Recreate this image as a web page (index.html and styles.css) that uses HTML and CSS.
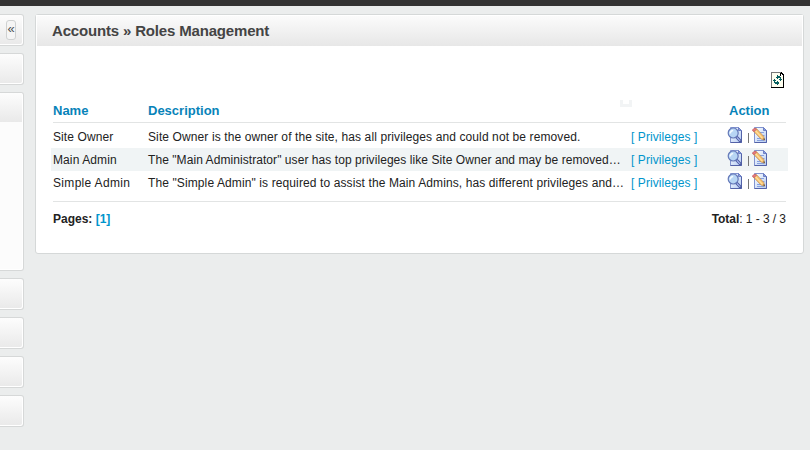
FILE: index.html
```html
<!DOCTYPE html>
<html lang="en">
<head>
<meta charset="utf-8">
<title>Roles Management</title>
<link rel="stylesheet" href="styles.css">
</head>
<body>
<svg class="defs" width="0" height="0">
  <defs>
    <linearGradient id="paper" x1="0" y1="0" x2="1" y2="1"><stop offset="0" stop-color="#fff"/><stop offset="1" stop-color="#b4ccf4"/></linearGradient>
    <symbol id="view" viewBox="0 0 16 16">
      <path d="M3.5.5h8l3 3v12h-11z" fill="url(#paper)" stroke="#8294d0"/>
      <path d="M14.5 3.5v12h-11" fill="none" stroke="#5362a8"/>
      <path d="M11.5.5v3h3z" fill="#8ba0e0" stroke="#6d7fc4"/>
      <path d="M9.8 10.3l3.5 3.7" stroke="#4d5ba0" stroke-width="3" stroke-linecap="round"/>
      <path d="M9.8 10.3l3.3 3.5" stroke="#a9b9f0" stroke-width="1.2"/>
      <circle cx="6.2" cy="6" r="5" fill="#b7d5f4" stroke="#6478b8" stroke-width="1.2"/>
      <path d="M3.2 6.5a3 3 0 0 1 3-3" fill="none" stroke="#f2faff" stroke-width="1.6"/>
    </symbol>
    <symbol id="edit" viewBox="0 0 16 16">
      <path d="M2.5.5h9l3 3v12h-12z" fill="url(#paper)" stroke="#8294d0"/>
      <path d="M14.5 3.5v12h-12" fill="none" stroke="#5362a8"/>
      <path d="M11.5.5v3h3z" fill="#8ba0e0" stroke="#6d7fc4"/>
      <path d="M8 5.5h4M9.5 8.5h3M5 11.5h4M5 13.5h7" stroke="#86a0df"/>
      <path d="M.8 3.6l3.4-2.4 7.6 8.3.9 3.8-3.7-1.3z" fill="#f6bf6c" stroke="#b98550" stroke-width=".6"/>
      <path d="M3 3.2l7.3 8" stroke="#ffe2a2" stroke-width="1.2"/>
      <path d="M.3 2.9L2.9 1l1.5 1.5L1.9 4.7z" fill="#ec7b7b" stroke="#b85661" stroke-width=".7"/>
      <path d="M11 12l1.8 1.3-.5-2z" fill="#333"/>
    </symbol>
  </defs>
</svg>
<div class="topbar"></div>
<div class="layout">
  <aside class="side">
    <div class="box"><span class="collapse">«</span></div>
    <div class="box"></div>
    <div class="box open"><div class="cap"></div></div>
    <div class="box"></div>
    <div class="box"></div>
    <div class="box"></div>
    <div class="box"></div>
  </aside>
  <main class="panel">
    <h1><span>Accounts » Roles Management</span></h1>
    <div class="content">
      <div class="tools">
        <svg class="refresh" width="13" height="16" viewBox="0 0 13 16" shape-rendering="crispEdges">
          <path d="M0 0h10l3 3v13H0z" fill="#000"/>
          <path d="M0 0h10v1H1v14H0z" fill="#777"/>
          <path d="M1 1h8v3h3v11H1z" fill="#fffff0"/>
          <path d="M10 2h1v1h1v1h-2z" fill="#fff"/>
          <path d="M6 3h1v1h2v1h1v2h1v1h-1v1H9V8H8V7h1V6H7v1H6V6H5V5h1zM3 7h1v1h1v1H4v1h2V9h1v1h1v2H7v1H6v-1H4v-1H3V9H2V8h1z" fill="#075f60"/>
        </svg>
      </div>
      <div class="row head"><span>Name</span><span>Description</span><span></span><span class="act">Action</span><i class="notch"></i></div>
      <div class="row"><span class="name">Site Owner</span><span class="desc d1">Site Owner is the owner of the site, has all privileges and could not be removed.</span><a>[ Privileges ]</a><span class="icons"><svg><use href="#view"/></svg><b></b><svg><use href="#edit"/></svg></span></div>
      <div class="row alt"><span class="name">Main Admin</span><span class="desc d2">The "Main Administrator" user has top privileges like Site Owner and may be removed…</span><a>[ Privileges ]</a><span class="icons"><svg><use href="#view"/></svg><b></b><svg><use href="#edit"/></svg></span></div>
      <div class="row"><span class="name n3">Simple Admin</span><span class="desc d3">The "Simple Admin" is required to assist the Main Admins, has different privileges and…</span><a>[ Privileges ]</a><span class="icons"><svg><use href="#view"/></svg><b></b><svg><use href="#edit"/></svg></span></div>
      <div class="foot"><span class="pages"><strong>Pages: <a>[1]</a></strong></span><span class="total"><strong>Total</strong>: 1 - 3 / 3</span></div>
    </div>
  </main>
</div>
</body>
</html>
```
FILE: styles.css
```css
* { box-sizing: border-box; }
body { margin: 0; height: 450px; overflow: hidden; background: #ebeded; color: #222; font: 12px/23px "Liberation Sans", Arial, sans-serif; }
.defs { position: absolute; }
.topbar { height: 6px; background: #333; }
.layout { display: flex; gap: 11px; padding-top: 8px; align-items: flex-start; }
.side { width: 24px; display: flex; flex-direction: column; gap: 7px; }
.box { height: 32px; border: 1px solid #d6d8d8; border-left: 0; border-radius: 0 3px 3px 0; background: linear-gradient(#fdfdfd, #e9e9e9); box-shadow: inset -1px -1px #fff; }
.box.open { height: 179px; background: #fcfcfc; }
.cap { height: 29px; margin-right: 1px; background: linear-gradient(#fdfdfd, #e9e9e9); }
.collapse { display: block; width: 10px; height: 20px; margin: 5px 0 0 6px; border: 1px solid #cfd1d1; border-radius: 3px; background: #f5f5f5; color: #4a5056; font-size: 13px; line-height: 16px; text-align: center; }
.panel { width: 769px; height: 240px; border: 1px solid #d5d8d8; border-radius: 3px; background: #fff; }
h1 { height: 31px; margin: 0; padding-left: 15px; border: 1px solid #fff; border-bottom: 0; background: linear-gradient(#fbfbfb, #e7e7e7); color: #444; font-size: 15px; line-height: 30px; }
h1 span { letter-spacing: -.17px; }
.content { padding: 0 15px; }
.tools { height: 54px; padding: 26px 4px 0 0; display: flex; justify-content: flex-end; }
.refresh { display: block; }
.row { position: relative; height: 23px; padding-left: 2px; display: grid; grid-template-columns: 95px 483px 96px 1fr; white-space: nowrap; line-height: 24px; }
.head { height: 23px; margin: 0 2px 2px; padding: 0; border-bottom: 1px solid #e2e4e4; color: #0783b9; font-size: 13px; font-weight: bold; line-height: 22px; }
.act { padding-left: 2px; }
.notch { position: absolute; left: 567px; top: 0; width: 12px; height: 7px; border: solid #f2f4f5; border-width: 0 3px 3px; }
.alt { background: #f0f4f5; }
.name { letter-spacing: .1px; }
.n3 { letter-spacing: .32px; }
.d1 { letter-spacing: .11px; }
.d2 { letter-spacing: .065px; }
.d3 { letter-spacing: .11px; }
a { color: #0095cc; text-decoration: none; }
.row > a { letter-spacing: .08px; }
.icons { display: flex; align-items: flex-start; padding-top: 2px; }
.icons svg { width: 16px; height: 16px; }
.icons b { width: 1px; height: 10px; margin: 6px 4px 0 5px; background: #777; }
.icons svg:last-child { margin-left: -1px; }
.foot { height: 35px; margin: 7px 2px 0; border-top: 1px solid #e2e4e4; display: flex; justify-content: space-between; line-height: 35px; }
.total { letter-spacing: -.05px; }
```
